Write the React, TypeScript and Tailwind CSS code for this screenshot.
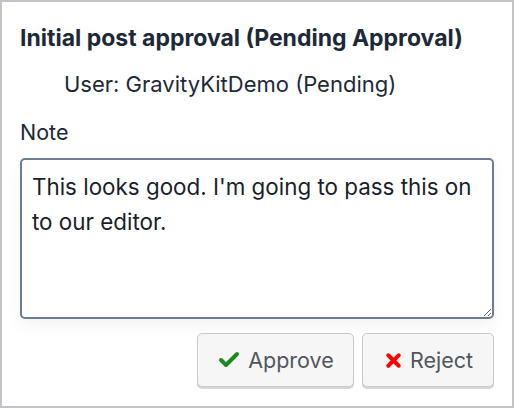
import { Check, X } from "lucide-react";

const App = () => {
    return (
        <div className="h-[408px] w-[514px] overflow-hidden bg-white font-['Inter',sans-serif]">
            <div className="flex h-full w-full flex-col border-2 border-[#c3c4c7] px-[18px] pt-[22px]">
                <h1 className="text-[23px] leading-[28px] font-bold text-[#1d2939]">Initial post approval (Pending Approval)</h1>
                <p className="mt-[18px] pl-[44px] text-[22px] leading-[28px] text-[#1d2939]">User: GravityKitDemo (Pending)</p>
                <label className="mt-[20px] text-[21.5px] leading-[28px] text-[#1d2939]">Note</label>
                <textarea
                    defaultValue="This looks good. I'm going to pass this on to our editor."
                    className="mt-[12px] h-[161px] w-[474px] resize-y rounded-[5px] border-2 border-[#6e7c91] px-[10px] pt-[9px] text-[22.4px] leading-[35px] text-[#1a1f2b] shadow-[0_6px_16px_rgba(0,0,0,0.05)] outline-none"
                />
                <div className="mt-[14px] flex justify-end gap-[8px]">
                    <button
                        type="button"
                        className="flex h-[54px] w-[157px] items-center justify-center gap-[7px] rounded-[5px] border border-[#c9c9c9] bg-[#f6f6f6] text-[21.5px] text-[#50575e] shadow-[0_2px_0_#d6d6d6]"
                    >
                        <Check size={24} strokeWidth={4} className="text-[#1e8a1e]" />
                        Approve
                    </button>
                    <button
                        type="button"
                        className="flex h-[54px] w-[132px] items-center justify-center gap-[6px] rounded-[5px] border border-[#c9c9c9] bg-[#f6f6f6] text-[21.5px] text-[#50575e] shadow-[0_2px_0_#d6d6d6]"
                    >
                        <X size={21} strokeWidth={4.5} className="text-[#ff0000]" />
                        Reject
                    </button>
                </div>
            </div>
        </div>
    );
};

export default App;
